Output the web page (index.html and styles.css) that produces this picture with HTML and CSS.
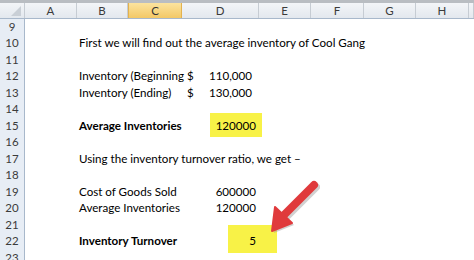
FILE: index.html
```html
<!DOCTYPE html>
<html>
	<head>
		<title>Inventory Turnover</title>
		<link rel="stylesheet" href="styles.css">
	</head>
	<body>
		<!-- Worksheet -->
		<div class="sheet">
			<!-- Column headers -->
			<div class="row head">
				<div class="corner">
					<svg width="12" height="12" viewBox="0 0 12 12"><polygon points="11,1 11,11 1,11" fill="#c9cfd6"/></svg>
				</div>
				<div class="col">A</div>
				<div class="col">B</div>
				<div class="col sel">C</div>
				<div class="col">D</div>
				<div class="col">E</div>
				<div class="col">F</div>
				<div class="col">G</div>
				<div class="col">H</div>
				<div class="col"></div>
			</div>

			<div class="row"><div class="num">9</div></div>
			<div class="row"><div class="num">10</div><div class="cell txt">First we will find out the average inventory of Cool Gang</div></div>
			<div class="row"><div class="num">11</div></div>
			<div class="row">
				<div class="num">12</div>
				<div class="cell txt">Inventory (Beginning</div>
				<div class="cell acc"><span>$</span><span>110,000</span></div>
			</div>
			<div class="row">
				<div class="num">13</div>
				<div class="cell txt">Inventory (Ending)</div>
				<div class="cell acc"><span>$</span><span>130,000</span></div>
			</div>
			<div class="row"><div class="num">14</div></div>
			<div class="row">
				<div class="num">15</div>
				<div class="cell txt bold">Average Inventories</div>
				<div class="cell val"><div class="mark mark-avg"></div><span>120000</span></div>
			</div>
			<div class="row"><div class="num">16</div></div>
			<div class="row"><div class="num">17</div><div class="cell txt">Using the inventory turnover ratio, we get –</div></div>
			<div class="row"><div class="num">18</div></div>
			<div class="row">
				<div class="num">19</div>
				<div class="cell txt">Cost of Goods Sold</div>
				<div class="cell val"><span>600000</span></div>
			</div>
			<div class="row">
				<div class="num">20</div>
				<div class="cell txt">Average Inventories</div>
				<div class="cell val"><span>120000</span></div>
			</div>
			<div class="row"><div class="num">21</div></div>
			<div class="row">
				<div class="num">22</div>
				<div class="cell txt bold">Inventory Turnover</div>
				<div class="cell val"><div class="mark mark-turn"></div><span>5</span></div>
			</div>
			<div class="row"><div class="num">23</div></div>

			<!-- Red arrow pointing at the result -->
			<svg class="arrow" width="60" height="66" viewBox="0 0 60 66">
				<g transform="translate(2,2)" fill="#9a9a9a" opacity="0.45">
					<line x1="46" y1="5" x2="15" y2="36" stroke="#9a9a9a" stroke-width="8" stroke-linecap="round"/>
					<polygon points="4,51 7,27 24,43"/>
				</g>
				<line x1="46" y1="5" x2="15" y2="36" stroke="#e03a3c" stroke-width="8" stroke-linecap="round"/>
				<polygon points="4,51 7,27 24,43" fill="#e03a3c" stroke="#e03a3c" stroke-width="2" stroke-linejoin="round"/>
			</svg>
		</div>
	</body>
</html>
```

FILE: styles.css
```css
body {
	margin: 0;
	background: #fff;
	font-family: Lato, "Liberation Sans", sans-serif;
	font-size: 11.6px;
	color: #000;
}
.sheet {
	position: relative;
	width: 474px;
	height: 260px;
	overflow: hidden;
}
.row {
	display: grid;
	grid-template-columns: 25px 52px 51px 54px 77px 52px 53px 52px 53px 1fr;
	height: 16.5px;
	line-height: 16.5px;
}
.row.head {
	height: 18.5px;
	line-height: 15px;
	box-sizing: border-box;
	border-top: 3px solid #b9bdc2;
	border-bottom: 1px solid #a8b8cb;
	background: linear-gradient(#f3f5f8, #e3e8ee);
	color: #3b3b3b;
	font-size: 11.5px;
}
.corner {
	border-right: 1px solid #c6ccd3;
	display: flex;
	align-items: flex-end;
	justify-content: flex-end;
}
.corner svg {
	margin: 0 2px 1px 0;
}
.col {
	text-align: center;
	border-right: 1px solid #c6ccd3;
}
.col.sel {
	background: linear-gradient(#fbe39e, #f3c866);
	border-right-color: #e3b24f;
	border-left: 1px solid #e3b24f;
	color: #333;
}
.num {
	grid-column: 1;
	text-align: center;
	background: #e7edf5;
	border-right: 1px solid #a8b8cb;
	border-bottom: 1px solid #c8d2de;
	box-sizing: border-box;
	color: #3b3b3b;
	font-size: 11.5px;
}
.cell {
	white-space: nowrap;
}
.cell.txt {
	grid-column: 3;
	padding-left: 2px;
}
.bold {
	font-weight: bold;
}
.cell.acc {
	grid-column: 5;
	display: flex;
	justify-content: space-between;
	padding: 0 7px 0 5px;
}
.cell.val {
	grid-column: 5;
	position: relative;
	text-align: right;
	padding-right: 3px;
}
.cell.val span {
	position: relative;
}
.mark {
	position: absolute;
	background: #f8f247;
}
.mark-avg {
	left: 28px;
	top: -4.5px;
	width: 52px;
	height: 24px;
}
.mark-turn {
	left: 46px;
	top: -8px;
	width: 49px;
	height: 28px;
}
.arrow {
	position: absolute;
	left: 268px;
	top: 180px;
}
```
